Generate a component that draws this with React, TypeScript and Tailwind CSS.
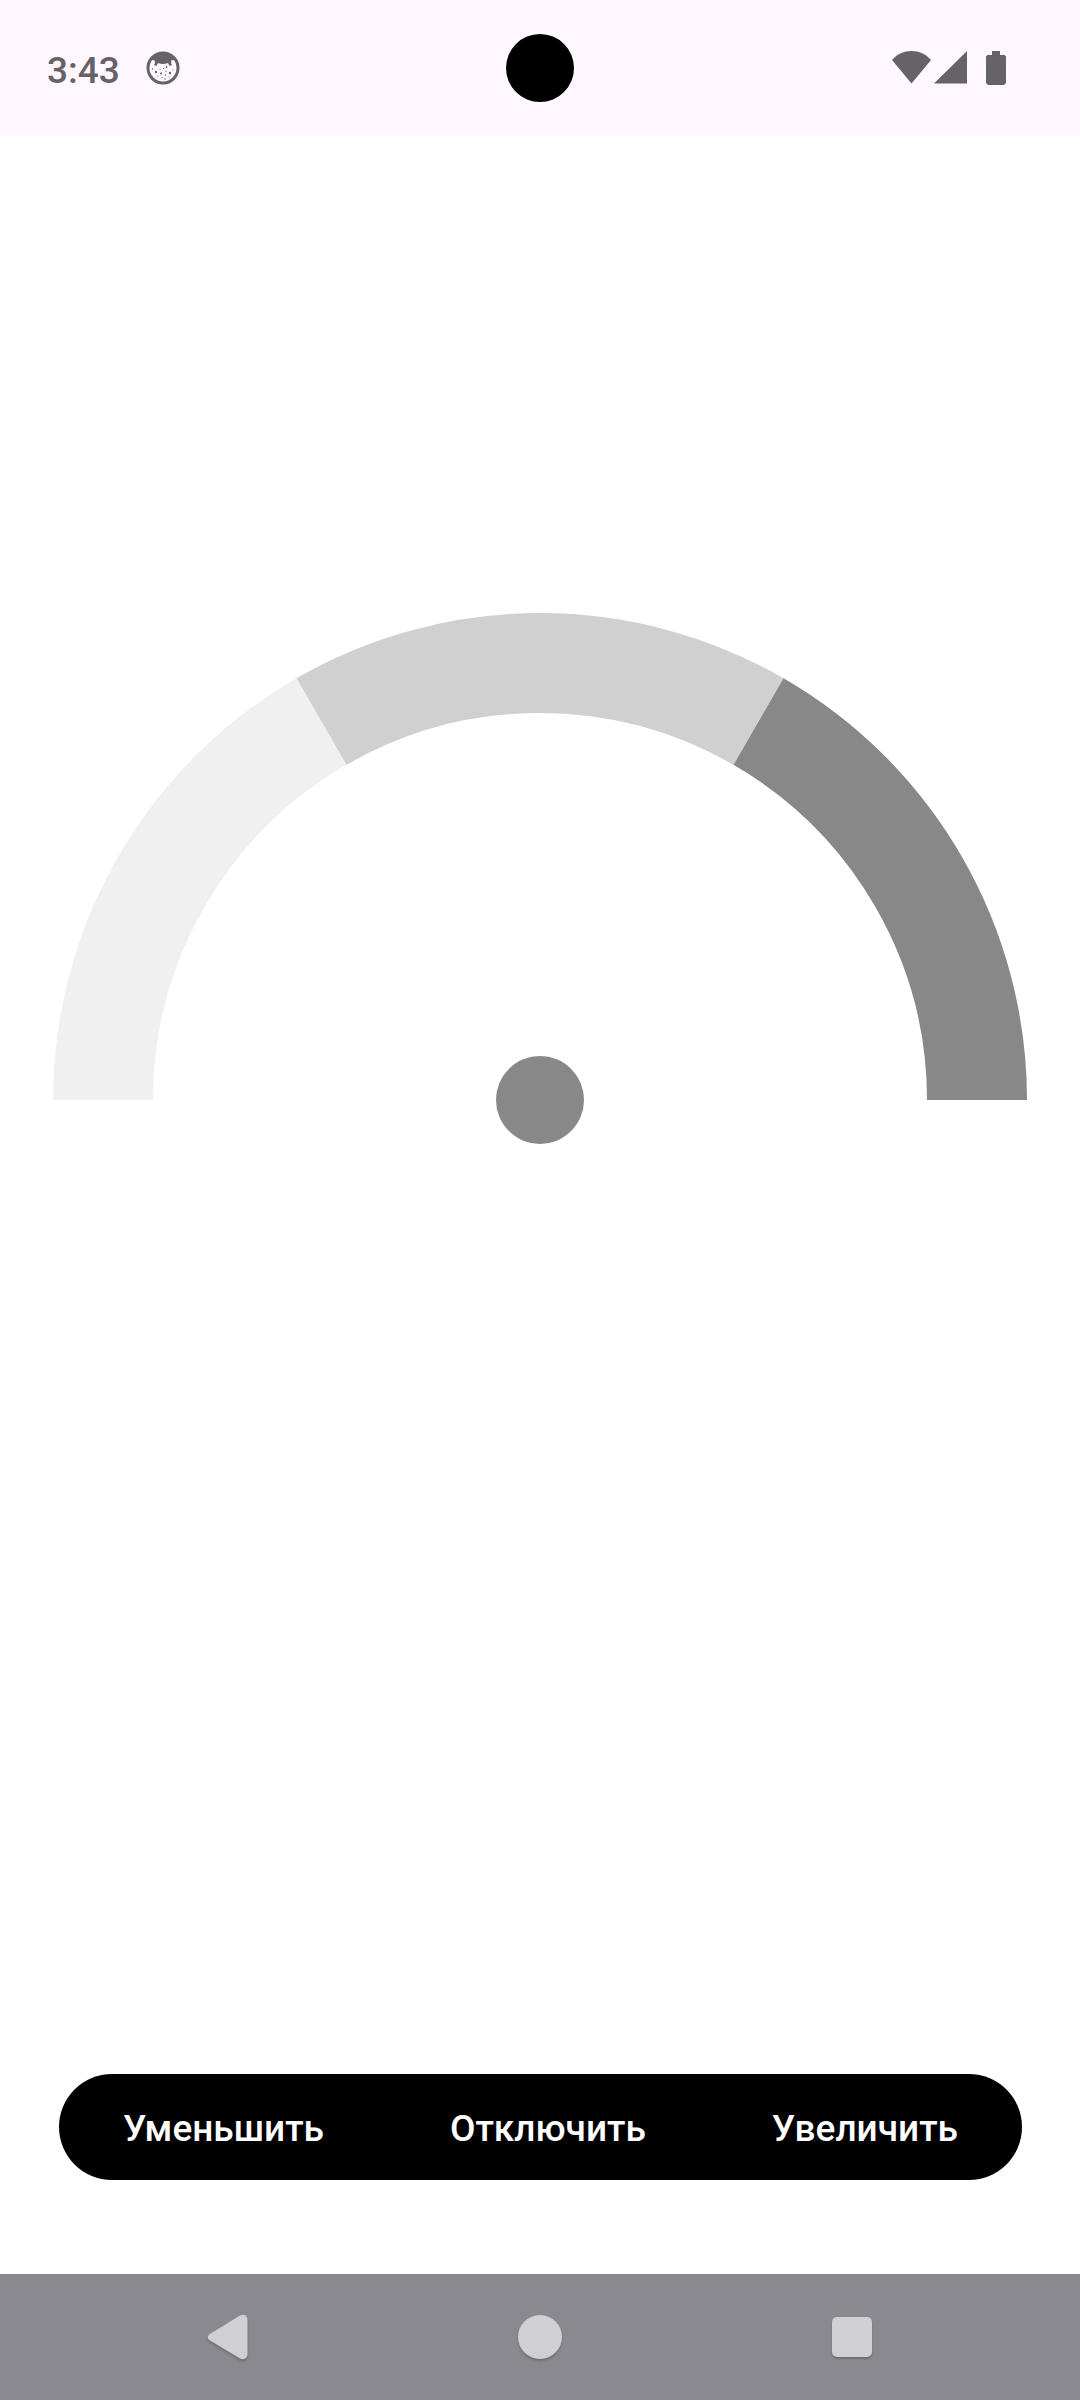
const SEGMENTS = [
  { from: 180, to: 120, color: '#f0f0f0' },
  { from: 120, to: 60, color: '#d0d0d0' },
  { from: 60, to: 0, color: '#888888' },
];

const CENTER = 487;
const RADIUS = 437;

function arc(from: number, to: number) {
  const point = (deg: number) => {
    const a = (deg * Math.PI) / 180;
    return `${CENTER + RADIUS * Math.cos(a)} ${CENTER - RADIUS * Math.sin(a)}`;
  };
  return `M${point(from)}A${RADIUS} ${RADIUS} 0 0 1 ${point(to)}`;
}

function Gauge() {
  return (
    <svg viewBox="0 0 974 531" className="block w-full" role="img" aria-label="Индикатор уровня">
      {SEGMENTS.map((s) => (
        <path key={s.color} d={arc(s.from, s.to)} fill="none" stroke={s.color} strokeWidth="100" />
      ))}
      <circle cx={CENTER} cy={CENTER} r="44" fill="#888888" />
    </svg>
  );
}

function FaceIcon() {
  return (
    <svg viewBox="0 0 34 34" className="size-[34px]" aria-hidden="true">
      <circle cx="17" cy="17" r="15" fill="none" stroke="currentColor" strokeWidth="3" />
      <path
        d="M5 8 L10 3 L17 1 L24 3 L29 8 L27 9.500 L25.500 9 L25 12 L26 14 L23.500 15 L22 12 Q17 14 12 12 L10.500 15 L8 14 L9 12 L8.500 9 L7 9.500 Z"
        fill="currentColor"
      />
      <g fill="currentColor">
        <circle cx="10" cy="21" r="1.200" />
        <circle cx="15" cy="22.500" r="1.100" />
        <circle cx="20.500" cy="16" r="0.900" />
        <circle cx="24" cy="22" r="1.200" />
        <circle cx="17.500" cy="17.500" r="0.600" />
        <circle cx="14" cy="18.500" r="0.500" />
        <circle cx="6.500" cy="18" r="0.700" />
        <circle cx="20" cy="20.500" r="0.600" />
        <circle cx="27" cy="19" r="0.600" />
        <circle cx="12" cy="25" r="0.600" />
        <circle cx="16" cy="26.500" r="0.600" />
        <circle cx="19.500" cy="24" r="0.700" />
        <circle cx="19" cy="28" r="0.700" />
        <circle cx="23" cy="26" r="0.500" />
      </g>
    </svg>
  );
}

function StatusBar() {
  return (
    <header className="relative flex h-[136px] items-center justify-between bg-[#fef7ff] pr-[74px] pl-[47px] text-[#656367]">
      <div className="flex items-center gap-[26px]">
        <span className="pt-[6px] text-[37px] leading-[44px] font-medium">3:43</span>
        <FaceIcon />
      </div>
      <div className="absolute top-[34px] left-1/2 size-[68px] -translate-x-1/2 rounded-full bg-black" />
      <div className="flex items-center">
        <svg viewBox="0 0 39 34" className="mr-[3px] h-[34px] w-[39px]" fill="currentColor" aria-hidden="true">
          <path d="M19.500 32.500 0 9C5 3 12 .0 19.500 0S34 3 39 9z" />
        </svg>
        <svg viewBox="0 0 33 34" className="mr-[19px] h-[34px] w-[33px]" fill="currentColor" aria-hidden="true">
          <path d="M33 0v32.500H0z" />
        </svg>
        <svg viewBox="0 0 20 34" className="h-[34px] w-[20px]" fill="currentColor" aria-hidden="true">
          <path d="M6 0h8v4h4.500L20 5.500V32l-2 2H2l-2-2V5.500L1.500 4H6z" />
        </svg>
      </div>
    </header>
  );
}

function Controls() {
  return (
    <div className="mr-[58px] mb-[94px] ml-[59px] mt-auto flex justify-between rounded-full bg-black px-8 text-[37px] leading-[44px] font-medium text-white">
      {['Уменьшить', 'Отключить', 'Увеличить'].map((label) => (
        <button key={label} type="button" className="px-8 pt-[33px] pb-[29px]">
          {label}
        </button>
      ))}
    </div>
  );
}

function NavBar() {
  return (
    <nav className="grid h-[126px] grid-cols-3 bg-[#8a898f] px-[72px] text-[#d0d0d2]">
      <button type="button" aria-label="Назад" className="flex items-center justify-center">
        <svg viewBox="0 0 46 46" className="size-[46px] drop-shadow-[0_2px_1px_rgba(0,0,0,0.2)]" aria-hidden="true">
          <path d="M5 20 35 1.500C39 -.5 42.500 2 42.500 6V40c0 4-3.500 6.500-7.500 4.500L5 26.500c-3-2-3-4.500 0-6.500z" fill="currentColor" />
        </svg>
      </button>
      <button type="button" aria-label="Домой" className="flex items-center justify-center">
        <span className="size-[44px] rounded-full bg-current shadow-[0_2px_2px_rgba(0,0,0,0.2)]" />
      </button>
      <button type="button" aria-label="Недавние" className="flex items-center justify-center">
        <span className="size-[40px] rounded-[5px] bg-current shadow-[0_2px_2px_rgba(0,0,0,0.2)]" />
      </button>
    </nav>
  );
}

export default function App() {
  return (
    <div className="flex min-h-screen flex-col bg-white font-[Roboto,sans-serif]">
      <StatusBar />
      <main className="flex flex-1 flex-col">
        <div className="px-[53px] pt-[477px]">
          <Gauge />
        </div>
        <Controls />
      </main>
      <NavBar />
    </div>
  );
}
